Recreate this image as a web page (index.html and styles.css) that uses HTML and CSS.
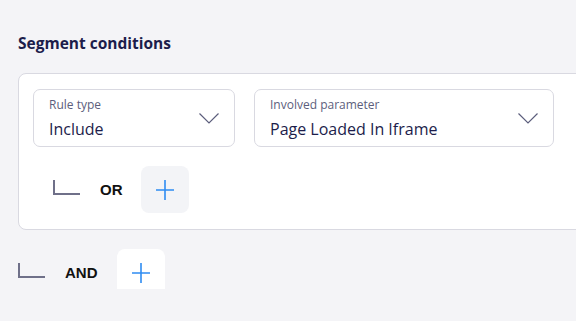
FILE: index.html
```html
<!DOCTYPE html>
<html lang="en">
<head>
  <meta charset="UTF-8" />
  <title>Segment conditions</title>
  <link rel="stylesheet" href="styles.css">
</head>
<body>
  <div class="page">
    <h2 class="title">Segment conditions</h2>

    <div class="card">
      <div class="rule">
        <div class="select select-type">
          <div class="select-text">
            <span class="select-label">Rule type</span>
            <span class="select-value">Include</span>
          </div>
          <svg class="chevron" width="20" height="11" viewBox="0 0 20 11"><path d="M0.5 0.5 L10 10 L19.5 0.5" fill="none" stroke="#5c5e7c" stroke-width="1.2"/></svg>
        </div>
        <div class="select select-param">
          <div class="select-text">
            <span class="select-label">Involved parameter</span>
            <span class="select-value">Page Loaded In Iframe</span>
          </div>
          <svg class="chevron" width="20" height="11" viewBox="0 0 20 11"><path d="M0.5 0.5 L10 10 L19.5 0.5" fill="none" stroke="#5c5e7c" stroke-width="1.2"/></svg>
        </div>
      </div>

      <div class="join join-or">
        <svg class="corner" width="28" height="15" viewBox="0 0 28 15"><path d="M1 0 V14 H27" fill="none" stroke="#6f7089" stroke-width="2"/></svg>
        <span class="join-label">OR</span>
        <button class="add add-grey">
          <svg width="18" height="20" viewBox="0 0 18 20"><path d="M9 0 V20 M0 10 H18" stroke="#2f8cf2" stroke-width="1.6"/></svg>
        </button>
      </div>
    </div>

    <div class="join join-and">
      <svg class="corner" width="28" height="15" viewBox="0 0 28 15"><path d="M1 0 V14 H27" fill="none" stroke="#6f7089" stroke-width="2"/></svg>
      <span class="join-label">AND</span>
      <button class="add add-white">
        <svg width="18" height="20" viewBox="0 0 18 20"><path d="M9 0 V20 M0 10 H18" stroke="#2f8cf2" stroke-width="1.6"/></svg>
      </button>
    </div>
  </div>
</body>
</html>
```

FILE: styles.css
```css
body {
  margin: 0;
  background-color: #f4f4f7;
  font-family: "Open Sans", "Noto Sans", sans-serif;
  color: #1c1d4b;
}
.page {
  height: 289px;
  overflow: hidden;
  padding: 0 0 0 18px;
}
.title {
  margin: 0;
  padding-top: 33px;
  height: 40px;
  font-size: 15.5px;
  font-weight: 700;
  line-height: 20px;
  color: #1c1d4b;
}
.card {
  width: 600px;
  height: 157px;
  background: #fff;
  border: 1px solid #d9d9e1;
  border-radius: 8px;
  box-sizing: border-box;
  padding: 15px 0 0 14px;
}
.rule {
  display: flex;
  gap: 19px;
}
.select {
  display: flex;
  align-items: flex-start;
  justify-content: space-between;
  height: 58px;
  box-sizing: border-box;
  border: 1px solid #d9d9e1;
  border-radius: 7px;
  padding: 7px 15px 0 15px;
}
.select-type {
  width: 202px;
}
.select-param {
  width: 300px;
}
.select-text {
  display: flex;
  flex-direction: column;
}
.select-label {
  font-size: 12px;
  line-height: 16px;
  color: #5c5e7c;
}
.select-value {
  margin-top: 4px;
  font-size: 16px;
  line-height: 24px;
  color: #1c1d4b;
}
.chevron {
  margin-top: 16px;
}
.join {
  display: flex;
  align-items: center;
}
.join-or {
  margin-top: 19px;
  padding-left: 20px;
}
.join-and {
  margin-top: 19px;
}
.corner {
  margin-top: -4px;
}
.join-label {
  font-family: "Liberation Sans", Arial, sans-serif;
  font-weight: bold;
  font-size: 15px;
  color: #111;
  margin-left: 19px;
  margin-right: 19px;
}
.join-or .join-label {
  margin-right: 18px;
}
.add {
  width: 48px;
  height: 47px;
  border: none;
  border-radius: 8px;
  display: flex;
  align-items: center;
  justify-content: center;
  padding: 0;
  cursor: pointer;
}
.add-grey {
  background: #f3f4f7;
}
.add-white {
  background: #fff;
}
```
